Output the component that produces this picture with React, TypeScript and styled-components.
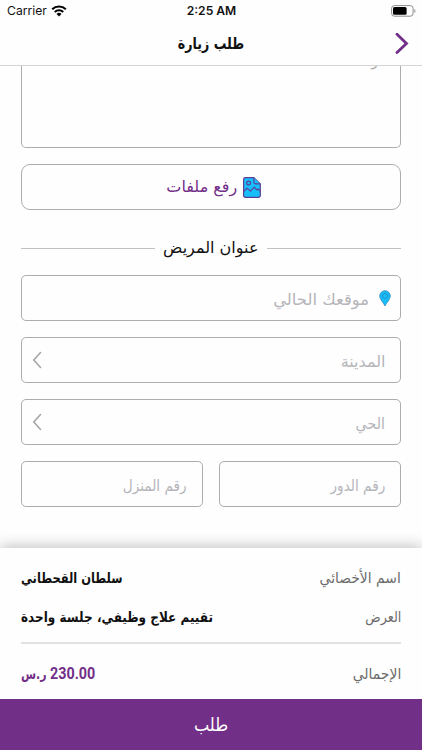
import React from "react";
import styled, { createGlobalStyle } from "styled-components";

const PURPLE = "#722f88";
const LINE = "#adadad";
const SKY = "#17bffa";

const GlobalStyle = createGlobalStyle`
  * { box-sizing: border-box; }
  body { margin: 0; background: #fff; }
`;

const Screen = styled.div`
  width: 422px;
  height: 750px;
  display: flex;
  flex-direction: column;
  overflow: hidden;
  background: #fefefe;
  font-family: "DejaVu Sans", sans-serif;
`;

const StatusBar = styled.div`
  height: 22px;
  flex: none;
  display: grid;
  grid-template-columns: 1fr auto 1fr;
  align-items: center;
  padding: 0 6px 0 7px;
  font: 400 12.2px/22px Inter, sans-serif;
  color: #111;
`;

const Carrier = styled.div`
  display: flex;
  align-items: center;
  gap: 4px;
`;

const Clock = styled.div`
  font-weight: 600;
  font-size: 12.1px;
`;

const Battery = styled.div`
  display: flex;
  justify-content: flex-end;
`;

const NavBar = styled.header`
  height: 44px;
  flex: none;
  display: grid;
  grid-template-columns: 40px 1fr 40px;
  align-items: center;
  justify-items: center;
  border-bottom: 1px solid #d4d4d4;
`;

const Label = styled.span<{ $size: number; $stretch?: number; $color?: string; $bold?: boolean; $side?: string; $drop?: number }>`
  display: block;
  white-space: nowrap;
  direction: rtl;
  line-height: 20px;
  font-size: ${(p) => p.$size}px;
  font-weight: ${(p) => (p.$bold ? 700 : 400)};
  color: ${(p) => p.$color ?? "#111"};
  transform: translateY(${(p) => p.$drop ?? 0}px) scaleX(${(p) => p.$stretch ?? 1});
  transform-origin: ${(p) => p.$side ?? "center"};
`;

const Form = styled.main`
  flex: 1;
  min-height: 0;
  overflow: hidden;
  padding: 0 21px 0 20.5px;
  display: flex;
  flex-direction: column;
`;

const Notes = styled.div`
  height: 82px;
  flex: none;
  border: 1.5px solid ${LINE};
  border-top: 0;
  border-radius: 0 0 5px 5px;
  padding-right: 22px;
  overflow: hidden;
  direction: rtl;
  font-size: 14px;
  line-height: 16px;
  color: #aaa;
`;

const NotesLine = styled.div`
  margin-top: -13px;
`;

const Upload = styled.div`
  height: 46px;
  flex: none;
  margin-top: 16px;
  border: 1px solid ${LINE};
  border-radius: 9px;
  display: flex;
  align-items: center;
  justify-content: center;
  gap: 6px;
  padding-left: 6px;
`;

const Divider = styled.div`
  height: 20px;
  flex: none;
  margin: 28px 0 17px;
  display: flex;
  align-items: center;
  gap: 8px;
`;

const Rule = styled.div`
  flex: 1;
  height: 1px;
  background: #c2c2c2;
`;

const DividerTitle = styled.div`
  width: 96px;
  display: flex;
  justify-content: center;
`;

const Fields = styled.div`
  display: flex;
  flex-direction: column;
  gap: 16px;
`;

const Pair = styled.div`
  display: grid;
  grid-template-columns: 1fr 1fr;
  gap: 16px;
`;

const Field = styled.div<{ $pin?: boolean }>`
  height: 46px;
  border: 1.5px solid ${LINE};
  border-radius: 5px;
  display: flex;
  align-items: center;
  gap: 10px;
  padding: 0 ${(p) => (p.$pin ? 9 : 15)}px 0 10px;
`;

const Spacer = styled.div`
  flex: 1;
`;

const Summary = styled.section`
  height: 151px;
  flex: none;
  padding: 20px 21px 0;
  background: #fefefe;
  box-shadow: 0 -2px 13px rgba(0, 0, 0, 0.24);
`;

const SummaryRow = styled.div<{ $gap: number }>`
  display: flex;
  height: 20px;
  justify-content: space-between;
  margin-bottom: ${(p) => p.$gap}px;
`;

const SummaryRule = styled.div`
  height: 2px;
  background: #e2e2e2;
  margin-bottom: 20px;
`;

const Price = styled.div`
  display: grid;
  grid-template-columns: 29px auto;
  color: ${PURPLE};
`;

const Amount = styled.span`
  font: 700 15.6px/20px Roboto, sans-serif;
  transform: scaleX(0.92);
  transform-origin: left;
`;

const Currency = styled.div`
  display: flex;
`;

const Submit = styled.button`
  height: 51px;
  flex: none;
  border: 0;
  background: ${PURPLE};
  display: flex;
  align-items: center;
  justify-content: center;
  font-family: inherit;
`;

const WifiIcon = () => (
  <svg width="16" height="12" viewBox="0 0 16 12" fill="none" stroke="#000" strokeWidth="2.1">
    <path d="M1.2 4.2a9.8 9.8 0 0 1 13.6 0" />
    <path d="M3.8 7a6 6 0 0 1 8.4 0" />
    <path d="M8 11.4 5.5 8.9a3.6 3.6 0 0 1 5 0z" fill="#000" stroke="none" />
  </svg>
);

const BatteryIcon = () => (
  <svg width="25" height="12" viewBox="0 0 25 12">
    <rect x="0.6" y="0.6" width="21.5" height="10.6" rx="2.8" fill="none" stroke="#8c8c8c" strokeWidth="1" />
    <rect x="2" y="2" width="13.6" height="7.8" rx="1.5" fill="#000" />
    <path d="M23.4 4v4c1.4-.6 1.4-3.400 0-4z" fill="#8c8c8c" />
  </svg>
);

const ForwardIcon = () => (
  <svg width="14" height="22" viewBox="0 0 14 22" fill="none" stroke={PURPLE} strokeWidth="2.8" strokeLinecap="round">
    <path d="M2 1.2 11.500 10.400 2 19.600" />
  </svg>
);

const SelectIcon = () => (
  <svg width="10" height="18" viewBox="0 0 10 18" fill="none" stroke="#a6a6a6" strokeWidth="1.6" strokeLinecap="round">
    <path d="M8.500 1.500 1.800 9l6.700 7.500" />
  </svg>
);

const PictureFileIcon = () => (
  <svg width="18" height="21" viewBox="0 0 18 21" fill={SKY} stroke="#5a3f98" strokeWidth="1.2" strokeLinejoin="round">
    <path d="M2.400.700h8.500l6.400 6.200v11.600a1.800 1.800 0 0 1-1.800 1.800H2.400a1.800 1.800 0 0 1-1.800-1.800V2.500A1.800 1.800 0 0 1 2.400.7z" />
    <path d="M10.900.700v4.400a1.800 1.800 0 0 0 1.800 1.800h4.600" />
    <circle cx="5.600" cy="6" r="1.900" />
    <path d="m.800 14.200 3.400-3.100 3.100 3.100 4-4.100 2.400 2.800 1.300-.9 2.200 2.200" fill="none" />
  </svg>
);

const PinIcon = () => (
  <svg width="12" height="17" viewBox="0 0 13 18" fill={SKY} stroke="#2a86bd" strokeWidth="0.9">
    <path d="M6.500 17C5 13.600.800 10 .800 6.300a5.700 5.700 0 0 1 11.400 0C12.200 10 8 13.600 6.500 17z" />
    <circle cx="6.500" cy="6.200" r="2.700" />
  </svg>
);

const GREY = "#b5b5ba";
const TEXT_GREY = "#6c6c6c";

export default function App() {
  return (
    <>
      <GlobalStyle />
      <Screen>
        <StatusBar>
          <Carrier>
            Carrier
            <WifiIcon />
          </Carrier>
          <Clock>2:25 AM</Clock>
          <Battery>
            <BatteryIcon />
          </Battery>
        </StatusBar>
        <NavBar>
          <span />
          <Label $size={16} $stretch={0.79} $bold>طلب زيارة</Label>
          <ForwardIcon />
        </NavBar>
        <Form>
          <Notes>
            <NotesLine>و</NotesLine>
          </Notes>
          <Upload>
            <Label $size={16} $color={PURPLE}>رفع ملفات</Label>
            <PictureFileIcon />
          </Upload>
          <Divider>
            <Rule />
            <DividerTitle>
              <Label $size={16}>عنوان المريض</Label>
            </DividerTitle>
            <Rule />
          </Divider>
          <Fields>
            <Field $pin>
              <Spacer />
              <Label $size={16.4} $drop={1.5} $color={GREY} $side="right">موقعك الحالي</Label>
              <PinIcon />
            </Field>
            <Field>
              <SelectIcon />
              <Spacer />
              <Label $size={15.5} $stretch={1.03} $drop={1.5} $color={GREY} $side="right">المدينة</Label>
            </Field>
            <Field>
              <SelectIcon />
              <Spacer />
              <Label $size={15.5} $stretch={0.92} $drop={1.5} $color={GREY} $side="right">الحي</Label>
            </Field>
            <Pair>
              <Field>
                <Spacer />
                <Label $size={15.5} $stretch={0.88} $drop={1.5} $color={GREY} $side="right">رقم المنزل</Label>
              </Field>
              <Field>
                <Spacer />
                <Label $size={15.5} $stretch={0.88} $drop={1.5} $color={GREY} $side="right">رقم الدور</Label>
              </Field>
            </Pair>
          </Fields>
        </Form>
        <Summary>
          <SummaryRow $gap={19}>
            <Label $size={14} $stretch={0.82} $bold $side="left">سلطان القحطاني</Label>
            <Label $size={15} $stretch={0.925} $color={TEXT_GREY} $side="right">اسم الأخصائي</Label>
          </SummaryRow>
          <SummaryRow $gap={15}>
            <Label $size={14} $stretch={0.86} $bold $side="left">تقييم علاج وظيفي، جلسة واحدة</Label>
            <Label $size={15} $stretch={0.85} $color={TEXT_GREY} $side="right">العرض</Label>
          </SummaryRow>
          <SummaryRule />
          <SummaryRow $gap={0}>
            <Price>
              <Currency>
                <Label $size={14} $stretch={0.78} $bold $color={PURPLE} $side="left">ر.س</Label>
              </Currency>
              <Amount>230.00</Amount>
            </Price>
            <Label $size={15} $stretch={0.93} $color={TEXT_GREY} $side="right">الإجمالي</Label>
          </SummaryRow>
        </Summary>
        <Submit>
          <Label $size={18} $stretch={0.9} $color="#fff">طلب</Label>
        </Submit>
      </Screen>
    </>
  );
}
